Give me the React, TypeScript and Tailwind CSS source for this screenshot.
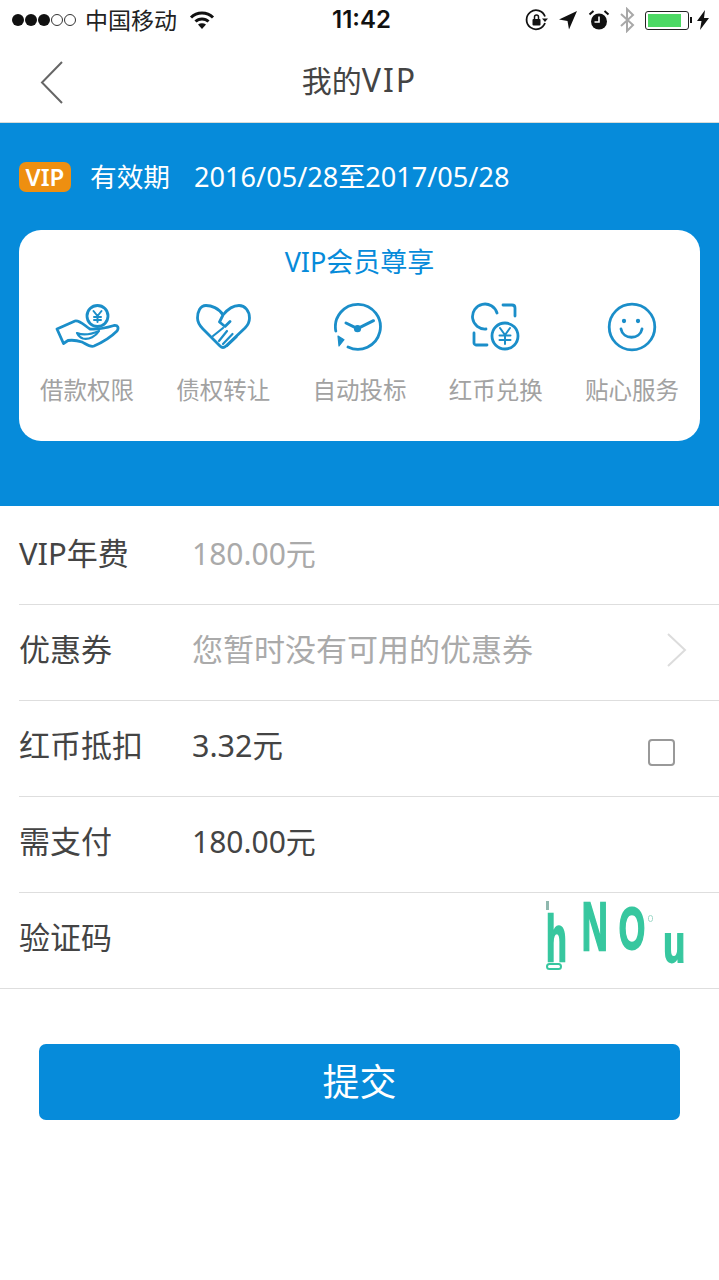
const blue = "#068bda";

function Dots() {
  return (
    <div className="flex items-center gap-[1px]">
      {[0, 1, 2].map((i) => (
        <span key={i} className="block w-[12px] h-[12px] rounded-full bg-[#111]" />
      ))}
      {[0, 1].map((i) => (
        <span key={i} className="block w-[12px] h-[12px] rounded-full border border-[#333]" />
      ))}
    </div>
  );
}

function Wifi() {
  return (
    <svg width="26" height="20" viewBox="0 0 26 20" fill="none" stroke="#111" strokeWidth="3">
      <path d="M2 7.500C8 1.500 18 1.500 24 7.500" />
      <path d="M6.500 11.500C10 8 16 8 19.500 11.500" />
      <path d="M13 19l-4-4.500c2.200-1.600 5.800-1.600 8 0z" fill="#111" stroke="none" />
    </svg>
  );
}

function StatusRight() {
  return (
    <div className="flex items-center">
      <svg width="24" height="24" viewBox="0 0 24 24" fill="none" className="mr-[9px]">
        <path d="M20 15A9.500 9.500 0 1 1 20 8.500" stroke="#111" strokeWidth="1.800" />
        <path d="M17 10.500h6l-3 3.500z" fill="#111" />
        <rect x="7.500" y="11" width="8" height="6.500" rx="1" fill="#111" />
        <path d="M9.500 11V9a2 2 0 0 1 4 0v2" stroke="#111" strokeWidth="1.500" />
      </svg>
      <svg width="20" height="20" viewBox="0 0 20 20" className="mr-[10px]">
        <path d="M19 1L1 9.500l8.500 1.500L11 19.500z" fill="#111" />
      </svg>
      <svg width="22" height="22" viewBox="0 0 22 22" fill="none" className="mr-[9px]">
        <circle cx="11" cy="12.500" r="8" fill="#111" />
        <path d="M11 7.500v5.500H6.500" stroke="#fff" strokeWidth="1.600" />
        <path d="M1.500 5.500L5.500 2M20.500 5.500L16.500 2" stroke="#111" strokeWidth="2" />
      </svg>
      <svg width="16" height="26" viewBox="0 0 16 26" fill="none" stroke="#a8a8a8" strokeWidth="2" className="mr-[10px]">
        <path d="M2 7l12 11-6 6V2l6 6L2 19" />
      </svg>
      <div className="w-[44px] h-[19px] rounded-[3px] border border-[#222] p-[2px]">
        <div className="w-[33px] h-full bg-[#4cd964]" />
      </div>
      <span className="block w-[2px] h-[6px] bg-[#111] mr-[5px] ml-[1px]" />
      <svg width="12" height="20" viewBox="0 0 12 20" className="mr-[10px]">
        <path d="M8 0L0 11h4.500L3 20l9-12H7z" fill="#111" />
      </svg>
    </div>
  );
}

const s = { fill: "none", stroke: "#1b8ec9", strokeWidth: 2.8, strokeLinecap: "round", strokeLinejoin: "round" } as const;

function HandIcon() {
  return (
    <svg width="66" height="50" viewBox="0 0 66 50" {...s}>
      <circle cx="43.500" cy="14" r="10.500" />
      <path d="M39.500 9l4 5 4-5M43.500 14v6M40 15h7M40 18h7" strokeWidth="2" />
      <path d="M3 27L21 19C26 18 31 24 36 27C44 28 55 25 60 23.500C64 23 65 26 63 29C57 35 47 41 40 44C36 45.500 32 42 28 40C22 38 18 38 14 38.500L9.500 41.500Z" />
      <path d="M23 31C30 34 38 32 45 29C42 34 35 38 29 36.500C26 35.500 24 33 23 31Z" strokeWidth="2.200" />
    </svg>
  );
}

function HeartIcon() {
  return (
    <svg width="56" height="46" viewBox="0 0 56 46" {...s}>
      <path d="M28 11C24 4 16 1.500 11 1.500C5 1.500 2.500 8 2.500 14C2.500 19 5 22 8 25L25 42C27 44 29 44 31 42L50 24C53 21 54.500 18 54.500 14C54.500 7 50 1.500 44 1.500C37 1.500 32 6 28 11L24.500 18L30 22.500L35 17.500" />
      <path d="M18 32L28 24M24 37L32 27M28 40L37.500 30M32 42L41.500 33" strokeWidth="2.200" />
    </svg>
  );
}

function ClockIcon() {
  return (
    <svg width="50" height="50" viewBox="0 0 50 50" {...s}>
      <path d="M1.800 29A22.500 22.500 0 1 1 14 45" />
      <path d="M12 21L23.500 26.700L39.500 18.700" strokeWidth="3" />
      <circle cx="23.500" cy="26.700" r="2.200" fill="#1b8ec9" />
      <path d="M4 34L10 37.700L5 44Z" fill="#1b8ec9" strokeWidth="1.200" />
    </svg>
  );
}

function ExchangeIcon() {
  return (
    <svg width="50" height="50" viewBox="0 0 50 50" {...s}>
      <path d="M15 27A12.500 12.500 0 1 1 26 11" />
      <path d="M32 3h9c2 0 3 1 3 3v8" />
      <path d="M3 31v10c0 1 1 2 2 2h11" />
      <circle cx="34" cy="34" r="13" />
      <path d="M29 26l5 7 5-7M34 33v9M28.500 33.500h11M28.500 38h11" strokeWidth="2" />
    </svg>
  );
}

function SmileIcon() {
  return (
    <svg width="50" height="50" viewBox="0 0 50 50" {...s}>
      <circle cx="25" cy="25" r="22.800" />
      <circle cx="17" cy="19" r="1.400" fill="#1b8ec9" strokeWidth="1.500" />
      <circle cx="31" cy="19" r="1.400" fill="#1b8ec9" strokeWidth="1.500" />
      <path d="M14 27c2 11 19 11 21 0" strokeWidth="2.800" />
    </svg>
  );
}

const perks = [
  { label: "借款权限", icon: <HandIcon /> },
  { label: "债权转让", icon: <HeartIcon /> },
  { label: "自动投标", icon: <ClockIcon /> },
  { label: "红币兑换", icon: <ExchangeIcon /> },
  { label: "贴心服务", icon: <SmileIcon /> },
];

function Row({ label, children, right, last, first }: { label: string; children?: React.ReactNode; right?: React.ReactNode; last?: boolean; first?: boolean }) {
  return (
    <div
      className={
        (first ? "h-[99px] pb-[3px] " : "h-[96px] pb-[6px] ") +
        "flex items-center relative border-b border-[#dedede] " +
        (last ? "pl-[20px]" : "ml-[19px] pl-[1px]")
      }
    >
      <div className="w-[172px] -ml-[1px] mr-[1px] text-[31px] text-[#444] whitespace-nowrap">{label}</div>
      <div className="flex-1 whitespace-nowrap">{children}</div>
      {right}
    </div>
  );
}

export default function App() {
  return (
    <div className="w-[719px] h-[1280px] bg-white overflow-hidden" style={{ fontFamily: '"Noto Sans", "Noto Sans CJK SC", sans-serif' }}>
      <div className="h-[40px] flex items-center justify-between pl-[12px] relative">
        <div className="flex items-center">
          <Dots />
          <span className="ml-[9px] text-[23px] leading-none text-[#222]">中国移动</span>
          <span className="ml-[12px]"><Wifi /></span>
        </div>
        <span className="absolute left-[332px] top-[7px] text-[24px] leading-[26px] font-semibold text-[#111]" style={{ fontFamily: "Inter, sans-serif" }}>11:42</span>
        <StatusRight />
      </div>

      <div className="h-[83px] border-b border-[#d8dcd8] flex items-center justify-center relative pb-[2px]">
        <span className="text-[30px] text-[#444]">我的<span className="text-[32px] tracking-[2px]">VIP</span></span>
        <svg width="24" height="44" viewBox="0 0 24 44" fill="none" stroke="#666" strokeWidth="2" className="absolute left-[40px] top-[21px]">
          <path d="M22 1L2 21.500 22 42" />
        </svg>
      </div>

      <div className="h-[383px] bg-[#068bda] px-[19px] pt-[33px]">
        <div className="h-[42px] flex items-center text-white">
          <span className="w-[52px] h-[30px] rounded-[7px] bg-[#ee8f10] flex items-center justify-center text-[24px] font-semibold">VIP</span>
          <span className="ml-[19px] text-[26.700px]">有效期</span>
          <span className="ml-[24px] text-[27.100px] whitespace-nowrap">2016/05/28至2017/05/28</span>
        </div>
        <div className="mt-[32px] h-[211px] rounded-[22px] bg-white pt-[13px]">
          <div className="text-center text-[27px] leading-[38px]" style={{ color: blue }}>VIP会员尊享</div>
          <div className="grid grid-cols-5 mt-[20px]">
            {perks.map((p) => (
              <div key={p.label} className="flex flex-col items-center">
                <div className="h-[52px] flex items-center justify-center">{p.icon}</div>
                <div className="mt-[21px] text-[23.500px] leading-[32px] text-[#a2a2a2] whitespace-nowrap">{p.label}</div>
              </div>
            ))}
          </div>
        </div>
      </div>

      <Row first label="VIP年费"><span className="text-[30px] text-[#aaa]">180.00元</span></Row>
      <Row
        label="优惠券"
        right={
          <svg width="22" height="36" viewBox="0 0 22 36" fill="none" stroke="#dcdcdc" strokeWidth="2" className="absolute right-[31px] top-[27px]">
            <path d="M2 2l17 16L2 34" />
          </svg>
        }
      >
        <span className="text-[31px] text-[#aaa]">您暂时没有可用的优惠券</span>
      </Row>
      <Row
        label="红币抵扣"
        right={<span className="absolute right-[44px] top-[38px] w-[27px] h-[27px] rounded-[4px] border-2 border-[#999]" />}
      >
        <span className="text-[30.500px] text-[#444]">3.32元</span>
      </Row>
      <Row label="需支付"><span className="text-[30px] text-[#444]">180.00元</span></Row>
      <Row
        last
        label="验证码"
        right={
          <div className="absolute left-[546px] top-[2px] w-[150px] h-[80px] flex items-center text-[#37c79f] font-bold blur-[0.600px] [-webkit-text-stroke:1.200px_#37c79f]" style={{ fontFamily: '"Liberation Sans", sans-serif' }}>
            <span className="absolute left-0 top-[6px] w-[3px] h-[9px] bg-[#8fb8ae]" />
            <span className="absolute left-[0px] top-[68px] w-[16px] h-[7px] rounded-full border-2 border-[#37c79f]" />
            <span className="text-[34px] leading-none scale-y-[1.900] translate-y-[3px]">h</span>
            <span className="ml-[15px] text-[36px] leading-none scale-y-[1.900] -translate-y-[8px]">N</span>
            <span className="ml-[11px] text-[34px] leading-none scale-y-[1.750] -translate-y-[7px]">O</span>
            <span className="absolute left-[102px] top-[20px] w-[5px] h-[7px] rounded-full border border-[#9fd8c8]" />
            <span className="ml-[18px] text-[36px] leading-none scale-y-[1.500] translate-y-[9px]">u</span>
          </div>
        }
      />

      <div className="px-[39px] pt-[55px]">
        <button className="w-[641px] h-[76px] rounded-[7px] bg-[#068bda] text-white text-[37px]">提交</button>
      </div>
    </div>
  );
}
